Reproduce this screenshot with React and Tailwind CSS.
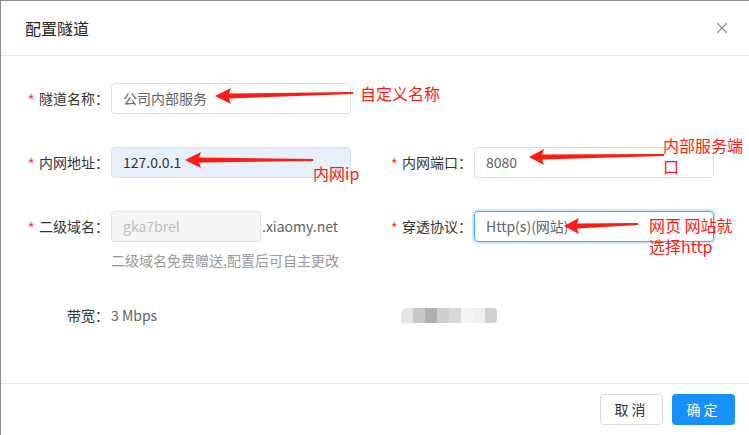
import { X } from "lucide-react";

const font = { fontFamily: '"Noto Sans CJK SC", "Noto Sans", sans-serif' };

function Label({ text, required = true, width = "w-[110px]" }) {
  return (
    <div className={`${width} shrink-0 text-right text-[14px] text-[#333] pr-[2px]`}>
      {required && <span className="text-[#f5222d] mr-[5px] font-['Liberation_Sans']">*</span>}
      {text}：
    </div>
  );
}

function Input({ value, className = "" }) {
  return (
    <div
      className={`h-[31px] rounded-[4px] border px-[11px] flex items-center text-[14px] ${className}`}
    >
      {value}
    </div>
  );
}

// red marker annotations drawn over the dialog
function Arrow({ tip, head, tail }) {
  const [tx, ty] = tip;
  const [hx, hy1, hy2] = head;
  const [ex, ey] = tail;
  const midY = (hy1 + hy2) / 2;
  const pts = [
    [tx, ty],
    [hx, hy1],
    [hx - 2, midY - 2.5],
    [ex, ey - 1],
    [ex, ey + 1],
    [hx - 2, midY + 2.5],
    [hx, hy2],
  ]
    .map((p) => p.join(","))
    .join(" ");
  return <polygon points={pts} fill="#ff1a12" />;
}

export default function App() {
  return (
    <div
      className="relative w-[749px] h-[435px] bg-white border-t border-l border-[#8c8c8c] flex flex-col overflow-hidden"
      style={font}
    >
      {/* Header */}
      <header className="h-[55px] shrink-0 border-b border-[#e8e8e8] flex items-center justify-between pl-[24px] pr-[18px]">
        <h2 className="text-[16px] text-[#262626]">配置隧道</h2>
        <X size={18} strokeWidth={1.5} className="text-[#8c8c8c]" />
      </header>

      {/* Body */}
      <main className="flex-1 pt-[27px]">
        <div className="flex items-center h-[31px]">
          <Label text="隧道名称" />
          <Input value="公司内部服务" className="w-[240px] border-[#dcdfe6] text-[#606266]" />
        </div>

        <div className="flex items-center h-[31px] mt-[33px]">
          <Label text="内网地址" />
          <Input value="127.0.0.1" className="w-[240px] border-[#dcdfe6] bg-[#e8f0fe] text-[#303133]" />
          <Label text="内网端口" width="w-[123px]" />
          <Input value="8080" className="w-[240px] border-[#dcdfe6] text-[#606266]" />
        </div>

        <div className="flex items-start mt-[33px]">
          <div className="flex items-center h-[31px]">
            <Label text="二级域名" />
          </div>
          <div className="w-[240px] shrink-0">
            <div className="flex items-center">
              <Input value="gka7brel" className="w-[150px] border-[#dcdfe6] bg-[#f5f5f5] text-[#bfbfbf]" />
              <span className="text-[14px] text-[#606266] ml-[1px]">.xiaomy.net</span>
            </div>
            <p className="text-[14px] text-[#999] mt-[8px] whitespace-nowrap">
              二级域名免费赠送,配置后可自主更改
            </p>
          </div>
          <div className="flex items-center h-[31px]">
            <Label text="穿透协议" width="w-[123px]" />
            <Input
              value="Http(s)(网站)"
              className="w-[240px] border-[#40a9ff] shadow-[0_0_0_2px_rgba(24,144,255,0.2)] text-[#606266]"
            />
          </div>
        </div>

        <div className="flex items-center h-[20px] mt-[34px]">
          <Label text="带宽" required={false} />
          <span className="text-[14px] text-[#606266] w-[290px]">3 Mbps</span>
          {/* pixelated blurred value */}
          <div className="flex h-[15px] opacity-90">
            <div className="w-[12px] bg-[#e2e2e2] rounded-tl-[6px]" />
            <div className="w-[12px] bg-[#c5c3c3]" />
            <div className="w-[12px] bg-[#a7a9a9]" />
            <div className="w-[12px] bg-[#c9cccc]" />
            <div className="w-[12px] bg-[#d4d6d6]" />
            <div className="w-[12px] bg-[#f4f4f4]" />
            <div className="w-[12px] bg-[#eceeef]" />
            <div className="w-[12px] bg-[#cbcbca] rounded-r-[4px]" />
          </div>
        </div>
      </main>

      {/* Footer */}
      <footer className="h-[52px] shrink-0 border-t border-[#e8e8e8] flex items-center justify-end gap-[9px] pr-[14px] pb-[1px]">
        <button className="w-[63px] h-[31px] rounded-[4px] border border-[#d9d9d9] bg-white text-[14px] text-[#333] tracking-[3px]">
          取消
        </button>
        <button className="w-[63px] h-[31px] rounded-[4px] bg-[#1890ff] text-[14px] text-white tracking-[3px]">
          确定
        </button>
      </footer>

      {/* Annotations */}
      <svg className="absolute left-[-1px] top-[-1px] pointer-events-none" width="749" height="435">
        <Arrow tip={[215, 96]} head={[231, 88, 104]} tail={[353, 93]} />
        <Arrow tip={[185, 160]} head={[201, 152, 168]} tail={[313, 160]} />
        <Arrow tip={[529, 157]} head={[544, 149, 165]} tail={[664, 155]} />
        <Arrow tip={[564, 226]} head={[579, 218, 234]} tail={[638, 224]} />
      </svg>
      <div className="absolute left-[359px] top-[82px] text-[16px] text-[#ff1a12] leading-[20px]">自定义名称</div>
      <div className="absolute left-[312px] top-[162px] text-[16px] text-[#ff1a12] leading-[20px]">内网ip</div>
      <div className="absolute left-[662px] top-[134px] w-[90px] text-[16px] text-[#ff1a12] leading-[21px]">
        内部服务端
        <br />口
      </div>
      <div className="absolute left-[648px] top-[214px] text-[16px] text-[#ff1a12] leading-[21px]">
        网页 网站就
        <br />
        选择http
      </div>
    </div>
  );
}
